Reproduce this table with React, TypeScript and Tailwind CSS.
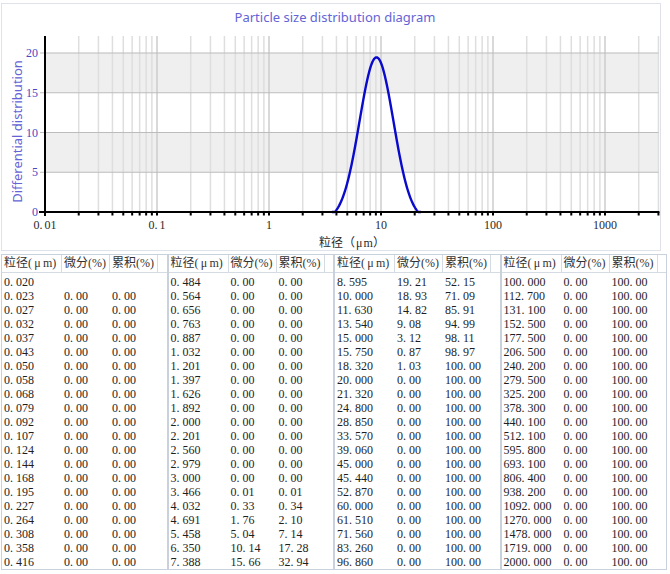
import React from "react";

const X0 = 45;
const DEC = 112;
const lx = (v: number) => X0 + (Math.log10(v) + 2) * DEC;
const Y0 = 212;
const YS = 7.95;
const ly = (v: number) => Y0 - v * YS;
const XR = lx(3000);

function curvePath() {
  const pts: string[] = [];
  for (let x = 332; x <= 421; x += 0.5) {
    const d = x - 376.5;
    const g = Math.exp(-(d * d) / (2 * 17 * 17));
    const f = Math.max(0, (g - 0.05) / 0.95) * 19.45;
    pts.push(`${x.toFixed(1)},${ly(f).toFixed(2)}`);
  }
  return "M" + pts.join(" L");
}

const gridVals: number[] = [];
for (let k = -2; k <= 3; k++) {
  for (let m = 1; m <= 9; m++) {
    const v = m * Math.pow(10, k);
    if (v <= 3000.0001) gridVals.push(v);
  }
}

const g1 = ["0.020","0.023","0.027","0.032","0.037","0.043","0.050","0.058","0.068","0.079","0.092","0.107","0.124","0.144","0.168","0.195","0.227","0.264","0.308","0.358","0.416"];
const g2 = ["0.484","0.564","0.656","0.763","0.887","1.032","1.201","1.397","1.626","1.892","2.000","2.201","2.560","2.979","3.000","3.466","4.032","4.691","5.458","6.350","7.388"];
const g2d = ["0.00","0.00","0.00","0.00","0.00","0.00","0.00","0.00","0.00","0.00","0.00","0.00","0.00","0.00","0.00","0.01","0.33","1.76","5.04","10.14","15.66"];
const g2c = ["0.00","0.00","0.00","0.00","0.00","0.00","0.00","0.00","0.00","0.00","0.00","0.00","0.00","0.00","0.00","0.01","0.34","2.10","7.14","17.28","32.94"];
const g3 = ["8.595","10.000","11.630","13.540","15.000","15.750","18.320","20.000","21.320","24.800","28.850","33.570","39.060","45.000","45.440","52.870","60.000","61.510","71.560","83.260","96.860"];
const g3d = ["19.21","18.93","14.82","9.08","3.12","0.87","1.03"];
const g3c = ["52.15","71.09","85.91","94.99","98.11","98.97"];
const g4 = ["100.000","112.700","131.100","152.500","177.500","206.500","240.200","279.500","325.200","378.300","440.100","512.100","595.800","693.100","806.400","938.200","1092.000","1270.000","1478.000","1719.000","2000.000"];

type Row = [string, string, string];
const groups: Row[][] = [
  g1.map((s, i) => [s, i === 0 ? "" : "0.00", i === 0 ? "" : "0.00"] as Row),
  g2.map((s, i) => [s, g2d[i], g2c[i]] as Row),
  g3.map((s, i) => [s, g3d[i] ?? "0.00", g3c[i] ?? "100.00"] as Row),
  g4.map((s) => [s, "0.00", "100.00"] as Row),
];

function Num({ s }: { s: string }) {
  if (!s) return null;
  const [a, b] = s.split(".");
  return (
    <>
      {a}
      <span className="inline-block w-[6px]">.</span>
      {b}
    </>
  );
}

function Group({ rows }: { rows: Row[] }) {
  return (
    <div className="flex-1 h-[316px] border border-[#c9d1dc] overflow-hidden">
      <div className="flex h-[18px] border-b border-[#d4dbe3] text-[12px] leading-[17px] text-[#333] whitespace-nowrap">
        <div className="w-[60px] shrink-0 border-r border-[#d4dbe3] pl-[2px]">
          粒径(<span className="inline-block w-[11px] text-center">μ</span>m)
        </div>
        <div className="w-[48px] shrink-0 border-r border-[#d4dbe3] pl-[2px]">微分(%)</div>
        <div className="w-[48px] shrink-0 border-r border-[#d4dbe3] pl-[2px]">累积(%)</div>
        <div className="flex-1" />
      </div>
      <div className="pt-[2px] text-[12px] text-[#1e1e1e]">
        {rows.map((r, i) => (
          <div key={i} className="flex h-[14px] leading-[14px] whitespace-nowrap">
            <div className="w-[60px] shrink-0 pl-[2px]"><Num s={r[0]} /></div>
            <div className="w-[48px] shrink-0 pl-[2px]"><Num s={r[1]} /></div>
            <div className="w-[48px] shrink-0 pl-[2px]"><Num s={r[2]} /></div>
          </div>
        ))}
      </div>
    </div>
  );
}

const serif = "'Liberation Serif', 'Noto Sans CJK SC', serif";

export default function App() {
  const xLabels: [number, React.ReactNode][] = [
    [0.01, <>0.<tspan dx="2">01</tspan></>],
    [0.1, <>0.<tspan dx="2">1</tspan></>],
    [1, "1"],
    [10, "10"],
    [100, "100"],
    [1000, "1000"],
  ];
  return (
    <div className="w-[670px] h-[574px] bg-white overflow-hidden font-['Liberation_Serif','Noto_Sans_CJK_SC',serif]">
      <div className="ml-[1px] mt-[3px] w-[660px] h-[248px] border border-[#dfe3e9]">
        <svg width="658" height="246" className="block">
          <g transform="translate(-2,-4)">
            <text
              x="335"
              y="21.5"
              textAnchor="middle"
              fontFamily="'Noto Sans', sans-serif"
              fontSize="13"
              fill="#6464d6"
            >
              Particle size distribution diagram
            </text>
            <text
              transform="translate(21.5,131.5) rotate(-90)"
              textAnchor="middle"
              fontFamily="'Noto Sans', sans-serif"
              fontSize="13"
              fill="#6464d6"
            >
              Differential distribution
            </text>

            <rect x={X0} y={ly(20)} width={XR - X0} height={ly(15) - ly(20)} fill="#efefef" />
            <rect x={X0} y={ly(10)} width={XR - X0} height={ly(5) - ly(10)} fill="#efefef" />

            {gridVals.slice(1).map((v, i) => {
              const x = lx(v);
              const major = Math.abs(Math.log10(v) - Math.round(Math.log10(v))) < 1e-6;
              return (
                <line
                  key={i}
                  x1={x}
                  x2={x}
                  y1={36}
                  y2={Y0}
                  stroke={major ? "#cdcdcd" : "#dedede"}
                  strokeWidth={1.5}
                />
              );
            })}

            {[5, 10, 15, 20].map((v) => (
              <line key={v} x1={40} x2={XR} y1={ly(v)} y2={ly(v)} stroke="#bcbcbc" strokeWidth={1.2} />
            ))}

            <path d={curvePath()} fill="none" stroke="#0a0acc" strokeWidth={2.4} strokeLinejoin="round" />

            <line x1={X0} x2={X0} y1={36} y2={216} stroke="#000" strokeWidth={2} />
            <line x1={39} x2={XR + 1} y1={Y0} y2={Y0} stroke="#000" strokeWidth={2} />
            {gridVals.slice(1).map((v, i) => (
              <line key={i} x1={lx(v)} x2={lx(v)} y1={Y0} y2={Y0 + 3.5} stroke="#000" strokeWidth={2} />
            ))}

            {[0, 5, 10, 15, 20].map((v) => (
              <text
                key={v}
                x={38}
                y={ly(v) + (v === 0 ? 3.5 : 4)}
                textAnchor="end"
                fontFamily={serif}
                fontSize="12"
                fill="#4848c4"
              >
                {v}
              </text>
            ))}

            {xLabels.map(([v, l], i) => (
              <text
                key={i}
                x={lx(v)}
                y={228.5}
                textAnchor="middle"
                fontFamily={serif}
                fontSize="12"
                fill="#2a2a2a"
              >
                {l}
              </text>
            ))}

            <text x={352} y={246.5} textAnchor="middle" fontFamily={serif} fontSize="12" fill="#2a2a2a">
              粒径（<tspan dx="1">μ</tspan><tspan dx="1">m</tspan>）
            </text>
          </g>
        </svg>
      </div>

      <div className="ml-[1px] mt-[3px] flex w-[666px]">
        {groups.map((g, i) => (
          <Group key={i} rows={g} />
        ))}
      </div>
    </div>
  );
}
